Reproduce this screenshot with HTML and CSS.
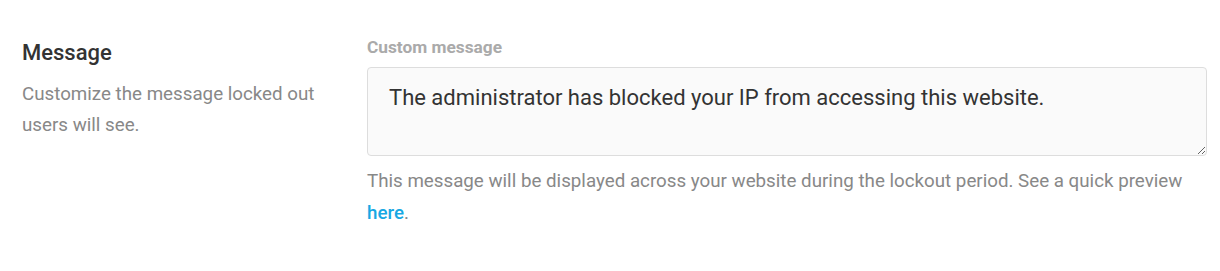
FILE: index.html
```html
<!DOCTYPE html>
<html>
<head>
<meta charset="utf-8">
<link rel="stylesheet" href="styles.css">
</head>
<body>
<div class="row">
  <div class="side">
    <h3 class="title">Message</h3>
    <p class="desc">Customize the message locked out users will see.</p>
  </div>
  <div class="main">
    <label class="label" for="msg">Custom message</label>
    <textarea id="msg" class="field">The administrator has blocked your IP from accessing this website.</textarea>
    <p class="help">This message will be displayed across your website during the lockout period. See a quick preview <a href="#" class="link">here</a>.</p>
  </div>
</div>
</body>
</html>
```

FILE: styles.css
```css
* { box-sizing: border-box; }
html, body { margin: 0; padding: 0; background: #fff; }
body { font-family: Roboto, "Liberation Sans", sans-serif; }
.row {
  display: flex;
  padding: 36px 13px 0 22px;
}
.side {
  width: 345px;
  flex: none;
  padding: 2px 30px 0 0;
}
.title {
  margin: 0;
  font-size: 22px;
  font-weight: 500;
  line-height: 30px;
  color: #333;
}
.desc {
  margin: 11px 0 0;
  font-size: 18.75px;
  line-height: 31px;
  color: #888;
}
.main {
  flex: 1;
  display: flex;
  flex-direction: column;
}
.label {
  font-size: 17.3px;
  font-weight: 700;
  line-height: 22px;
  color: #aaa;
  margin-bottom: 9px;
}
.field {
  display: block;
  width: 100%;
  height: 89px;
  padding: 15px 21px;
  border: 1px solid #ddd;
  border-radius: 4px;
  background: #fafafa;
  font-family: Roboto, "Liberation Sans", sans-serif;
  font-size: 22px;
  line-height: 30px;
  color: #333;
  resize: vertical;
  outline: none;
}
.help {
  margin: 9px 0 0;
  font-size: 18.75px;
  line-height: 32px;
  color: #888;
}
.link {
  color: #17a8e3;
  font-weight: 500;
  text-decoration: none;
}
```
